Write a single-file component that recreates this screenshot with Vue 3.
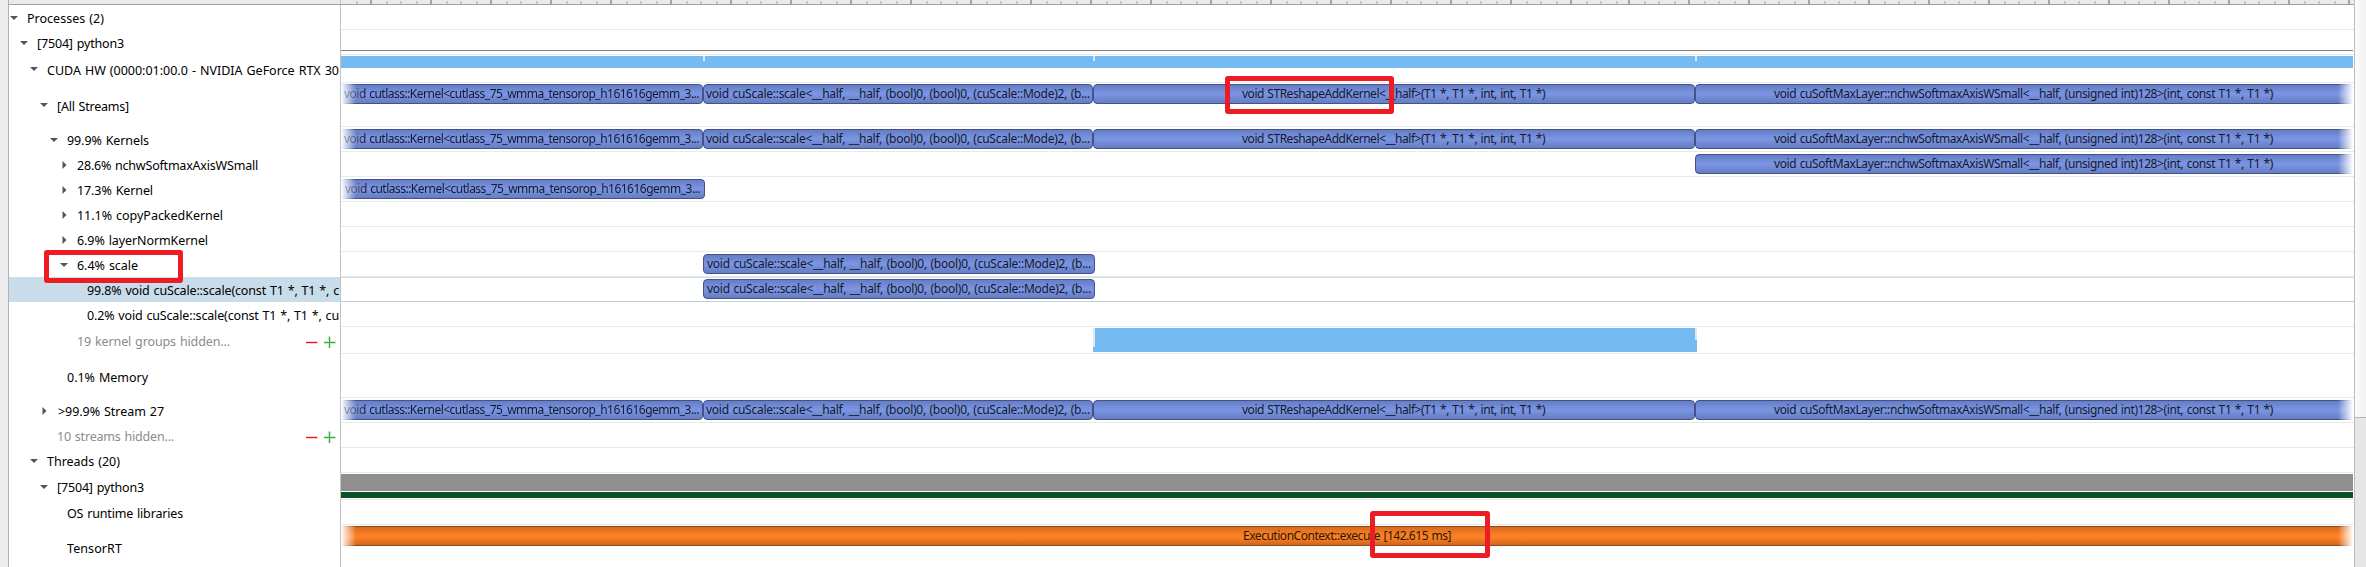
<script setup>
const CUT = 'void cutlass::Kernel<cutlass_75_wmma_tensorop_h161616gemm_3...'
const SCALE = 'void cuScale::scale<__half, __half, (bool)0, (bool)0, (cuScale::Mode)2, (b...'
const RESHAPE = 'void STReshapeAddKernel<__half>(T1 *, T1 *, int, int, T1 *)'
const SOFTMAX = 'void cuSoftMaxLayer::nchwSoftmaxAxisWSmall<__half, (unsigned int)128>(int, const T1 *, T1 *)'

/* start, width: pixels from the left edge of the timeline; tx, tw: label start and width */
const cut = { start: 0, width: 362, text: CUT, tx: 3, tw: 355, fade: 'left' }
const scale = { start: 362, width: 390, text: SCALE, tx: 3, tw: 384 }
const reshape = { start: 752, width: 602, text: RESHAPE, tx: 149, tw: 303 }
const softmax = { start: 1354, width: 658, text: SOFTMAX, tx: 79, tw: 499, fade: 'right' }
const all = [cut, scale, reshape, softmax]
const scaleOnly = [{ ...scale, width: 392, tx: 4 }]

const rows = [
  { label: 'Processes (2)', w: 77, x: 18, h: 25, arrow: 'down' },
  { label: '[7504] python3', w: 87, x: 28, h: 25, arrow: 'down', kind: 'thread' },
  { label: 'CUDA HW (0000:01:00.0 - NVIDIA GeForce RTX 30', w: 292, x: 38, h: 28, arrow: 'down', kind: 'usage' },
  { label: '[All Streams]', w: 72, x: 48, h: 44, arrow: 'down', bars: all, top: 1 },
  { label: '99.9% Kernels', w: 82, x: 58, h: 25, arrow: 'down', bars: all },
  { label: '28.6% nchwSoftmaxAxisWSmall', w: 181, x: 68, h: 25, arrow: 'right', bars: [softmax] },
  { label: '17.3% Kernel', w: 76, x: 68, h: 25, arrow: 'right', bars: [{ ...cut, width: 364, tx: 4 }] },
  { label: '11.1% copyPackedKernel', w: 146, x: 68, h: 25, arrow: 'right' },
  { label: '6.9% layerNormKernel', w: 131, x: 68, h: 25, arrow: 'right' },
  { label: '6.4% scale', w: 61, x: 68, h: 25, arrow: 'down', bars: scaleOnly },
  { label: '99.8% void cuScale::scale(const T1 *, T1 *, c', w: 252, x: 78, h: 25, bars: scaleOnly, selected: true },
  { label: '0.2% void cuScale::scale(const T1 *, T1 *, cu', w: 252, x: 78, h: 25 },
  { label: '19 kernel groups hidden...', w: 153, x: 68, h: 27, muted: true, kind: 'group' },
  { label: '0.1% Memory', w: 81, x: 58, h: 44 },
  { label: '>99.9% Stream 27', w: 106, x: 49, h: 25, arrow: 'right', ax: 48, bars: all },
  { label: '10 streams hidden...', w: 117, x: 48, h: 25, muted: true },
  { label: 'Threads (20)', w: 73, x: 38, h: 25, arrow: 'down' },
  { label: '[7504] python3', w: 87, x: 48, h: 27, arrow: 'down', kind: 'cpu' },
  { label: 'OS runtime libraries', w: 116, x: 58, h: 25 },
  {
    label: 'TensorRT', w: 55, x: 58, h: 44, top: 1,
    bars: [{ start: 0, width: 2012, text: 'ExecutionContext::execute [142.615 ms]', tx: 902, tw: 208, fade: 'both', orange: true }],
  },
]

const ticks = []
for (let i = -1; i < 34; i++) {
  const base = 29 + i * 60 - (i > 20 ? 2 : 0)
  ticks.push({ x: base, major: true }, { x: base + 16 }, { x: base + 30 }, { x: base + 46 })
}
const visibleTicks = ticks.filter((t) => t.x >= 0 && t.x < 2012)
const notches = [362, 752, 1354]

const vFit = {
  mounted(el, { value }) {
    el.style.letterSpacing = '0px'
    el.style.wordSpacing = '0.8px'
    const natural = el.getBoundingClientRect().width
    el.style.letterSpacing = (value - natural) / el.textContent.length + 'px'
  },
}
</script>

<template>
  <div class="app">
    <div class="gutter"></div>
    <main class="main">
      <header class="ruler">
        <div class="ruler-side"></div>
        <div class="ruler-track">
          <i v-for="t in visibleTicks" :key="t.x" class="tick" :class="{ major: t.major }" :style="{ left: t.x + 'px' }"></i>
        </div>
      </header>
      <div v-for="(r, i) in rows" :key="i" class="row" :class="{ selected: r.selected }" :style="{ height: r.h + 'px' }">
        <div class="side" :style="{ paddingLeft: r.x + 'px' }">
          <svg v-if="r.arrow" class="arrow" :style="{ left: (r.ax || r.x) - 18 + 'px' }" width="10" height="10" viewBox="0 0 10 10">
            <path v-if="r.arrow === 'down'" d="M1 3H9L5 7Z" fill="#555" />
            <path v-else d="M3.5 1V9L7.5 5Z" fill="#555" />
          </svg>
          <span v-fit="r.w" class="label" :class="{ muted: r.muted }">{{ r.label }}</span>
          <svg v-if="r.muted" class="tools" width="30" height="12" viewBox="0 0 30 12">
            <path d="M0 6.5H12" stroke="#fcc" stroke-width="3" />
            <path d="M0 6.5H11" stroke="#e5181c" />
            <path d="M18 6.5H30M23.5 0V12" stroke="#cdebcd" stroke-width="3" />
            <path d="M18 6.5H29M23.5 1V12" stroke="#38a838" />
          </svg>
        </div>
        <div class="track">
          <div v-if="r.kind === 'thread'" class="hairline"></div>
          <div v-if="r.kind === 'usage'" class="usage">
            <i v-for="n in notches" :key="n" class="notch" :style="{ left: n + 'px' }"></i>
          </div>
          <div v-if="r.kind === 'group'" class="group"></div>
          <template v-if="r.kind === 'cpu'">
            <div class="cpu"></div>
            <div class="state"></div>
          </template>
          <div
            v-for="b in r.bars"
            :key="b.start"
            class="bar"
            :class="[b.fade ? 'fade-' + b.fade : '', { orange: b.orange }]"
            :style="{ left: b.start + 'px', width: b.width + 'px', top: (r.top || 2) + 'px', paddingLeft: b.tx + 'px' }"
          >
            <span v-fit="b.tw" class="bar-text">{{ b.text }}</span>
          </div>
        </div>
      </div>
    </main>
    <aside class="scroll"><div class="thumb"></div></aside>
    <div class="mark mark-kernel"></div>
    <div class="mark mark-scale"></div>
    <div class="mark mark-time"></div>
  </div>
</template>

<style>
body { margin: 0; overflow: hidden; }
</style>

<style scoped>
.app {
  position: relative;
  display: flex;
  width: 2366px;
  height: 567px;
  overflow: hidden;
  background: #fff;
  color: #000;
  font-family: "Noto Sans", "Open Sans", sans-serif;
  font-size: 12.5px;
}
.gutter { box-sizing: border-box; width: 9px; flex: none; background: #ededed; border-right: 1px solid #b2b2b2; }
.main { width: 2345px; flex: none; overflow: hidden; }
.ruler { display: flex; box-sizing: border-box; height: 5px; background: #ebebeb; border-bottom: 1px solid #a0a0a0; }
.ruler-side { box-sizing: border-box; width: 332px; border-right: 1px solid #c3c3c3; }
.ruler-track { position: relative; flex: 1; }
.tick { position: absolute; top: 1px; width: 2px; height: 3px; background: #c8c8c8; }
.tick.major { top: 0; height: 4px; background: #a5a5a5; }
.row { display: flex; }
.side {
  position: relative;
  box-sizing: border-box;
  display: flex;
  align-items: center;
  width: 332px;
  flex: none;
  overflow: hidden;
  border-right: 1px solid #c3c3c3;
}
.label { white-space: pre; line-height: 20px; margin-top: 3px; }
.muted { color: #8b8b8b; }
.arrow { position: absolute; top: calc(50% - 5px); }
.tools { position: absolute; left: 297px; top: calc(50% - 5px); }
.selected .side { background: #c8dcea; }
.track { position: relative; box-sizing: border-box; flex: 1; border-bottom: 1px solid #e9e9e9; }
.selected .track { border-top: 1px solid #cbdeec; border-bottom-color: #bdcddb; }
.selected .bar { margin-top: -1px; }
.hairline { height: 1px; margin: 20px 1px 0 0; background: #828282; }
.usage { position: relative; height: 12px; margin: 1px 1px 0 0; background: #74bbf3; }
.notch { position: absolute; top: 0; width: 2px; height: 5px; background: #e6e6e6; }
.group { display: flex; justify-content: space-between; width: 604px; height: 24px; margin: 1px 0 0 752px; background: #74bbf3; }
.group::before { content: ""; width: 2px; height: 19px; background: #e6e6e6; }
.group::after { content: ""; width: 2px; height: 12px; background: #e6e6e6; }
.cpu { height: 17px; margin: 1px 1px 1px 0; background: #8f8f8f; }
.state { height: 6px; margin-right: 1px; background: #0b5127; }
.bar {
  position: absolute;
  box-sizing: border-box;
  height: 20px;
  overflow: hidden;
  color: #15192b;
}
.bar::before {
  content: "";
  position: absolute;
  inset: 0;
  box-sizing: border-box;
  border: 1px solid #43528a;
  border-radius: 4px;
  background: linear-gradient(#657dc3, #7b96e6 50%, #7690dc 60%, #667dc2);
}
.bar-text { position: relative; display: inline-block; vertical-align: top; font-size: 12px; line-height: 19px; white-space: pre; }
.bar.orange { color: #2a1808; }
.bar.orange::before { border-color: #91471a; background: linear-gradient(#d66c1d, #fb7f24 45%, #fb7f24 60%, #d0671b); }
.fade-left .bar-text { background: linear-gradient(90deg, #999, #15192b 22px); background-clip: text; color: transparent; }
.fade-left::before { border-left: 0; border-radius: 0 4px 4px 0; mask-image: linear-gradient(90deg, transparent, #000 15px); }
.fade-right::before { border-right: 0; border-radius: 4px 0 0 4px; mask-image: linear-gradient(270deg, transparent, #000 15px); }
.fade-both::before {
  border-left: 0;
  border-right: 0;
  border-radius: 0;
  mask-image: linear-gradient(90deg, transparent, #000 15px, #000 calc(100% - 15px), transparent);
}
.scroll { box-sizing: border-box; flex: 1; background: #e6e6e6; border-left: 1px solid #bcbcbc; }
.thumb { box-sizing: border-box; height: 418px; background: linear-gradient(90deg, #fcfcfc, #f0f0f0); border-bottom: 1px solid #b5b5b5; }
.mark { position: absolute; box-sizing: border-box; border: 5px solid #ed1c24; border-radius: 3px; }
.mark-kernel { left: 1225px; top: 76px; width: 169px; height: 38px; }
.mark-scale { left: 44px; top: 250px; width: 139px; height: 33px; }
.mark-time { left: 1370px; top: 511px; width: 120px; height: 47px; }
</style>
